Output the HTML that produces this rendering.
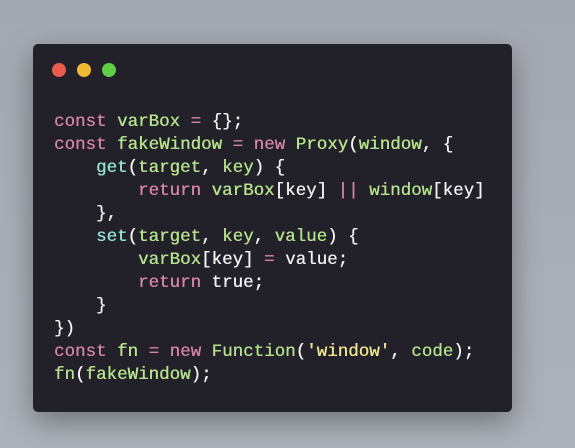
<!DOCTYPE html>
<html><head><style>
html,body{margin:0;padding:0}
body{width:575px;height:448px;background:linear-gradient(180deg,#a4a9b1 0%,#adb2ba 100%);position:relative;overflow:hidden;font-family:"Liberation Mono",monospace}
.card{position:absolute;left:33px;top:44px;width:479px;height:368px;background:#22212a;border-radius:5px;box-shadow:0 10px 30px rgba(0,0,0,.35)}
.dot{position:absolute;top:19px;width:14px;height:14px;border-radius:50%}
pre{position:absolute;left:21px;top:67px;margin:0;font-family:"Liberation Mono",monospace;font-size:17.5px;line-height:23px;color:#f2f2f2;font-weight:normal;text-shadow:0.3px 0 0 currentColor}
.k{color:#d884a8}.g{color:#b6e48c}.c{color:#94e2d2}.y{color:#ece58d}
</style></head><body>
<div class="card">
<div class="dot" style="left:19px;background:#e85d4d"></div>
<div class="dot" style="left:44px;background:#f0bb33"></div>
<div class="dot" style="left:69px;background:#5fcd45"></div>
<pre><span class="k">const</span> <span class="g">varBox</span> <span class="k">=</span> {};
<span class="k">const</span> <span class="g">fakeWindow</span> <span class="k">=</span> <span class="k">new</span> <span class="g">Proxy</span>(<span class="g">window</span>, {
    <span class="c">get</span>(<span class="g">target</span>, <span class="g">key</span>) {
        <span class="k">return</span> <span class="g">varBox</span>[key] <span class="k">||</span> <span class="g">window</span>[key]
    },
    <span class="c">set</span>(<span class="g">target</span>, <span class="g">key</span>, <span class="g">value</span>) {
        <span class="g">varBox</span>[key] <span class="k">=</span> value;
        <span class="k">return</span> true;
    }
})
<span class="k">const</span> <span class="g">fn</span> <span class="k">=</span> <span class="k">new</span> <span class="g">Function</span>(<span class="y">'window'</span>, <span class="g">code</span>);
<span class="g">fn</span>(<span class="g">fakeWindow</span>);</pre>
</div>
</body></html>
